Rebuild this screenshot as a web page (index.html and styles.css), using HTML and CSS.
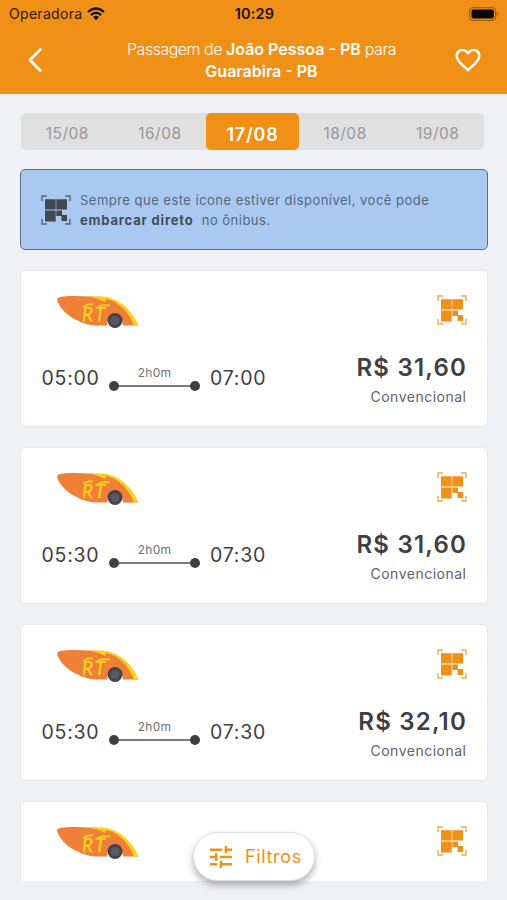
FILE: index.html
```html
<!DOCTYPE html>
<html lang="pt-BR">
<head>
<meta charset="utf-8">
<title>Passagens</title>
<link rel="stylesheet" href="styles.css">
</head>
<body>
<svg class="sprite" aria-hidden="true">
  <symbol id="qr" viewBox="0 0 30 30">
    <path d="M1 6V1h5M24 1h5v5M29 24v5h-5M6 29H1v-5" fill="none" stroke="currentColor" stroke-width="1.500" opacity=".75"/>
    <path d="M4 4.300h10.700v10.200H4zM15.300 4.300H26v10.200H15.300zM4 15.500h10.700V26.500H4zM15.300 15.500h5.700v4.500h5v6h-5.500v-5h-5.200z" fill="currentColor"/>
  </symbol>
  <symbol id="logo" viewBox="0 0 82 34">
    <path d="M0 4C2 1 10 1 18 1L45 2C60 3 73 13 81 30.500H66Q65 20 58 20Q50 21 50 30.500H38C20 29 2 16 0 4Z" fill="#f07f38"/>
    <path d="M31 1.300L46 1.500C62 3 75 15 81.500 30.500H77C72 17 61 6 49 4L48 7C43 4 37 3 31 1.300Z" fill="#fdd01c"/>
    <circle cx="58" cy="25.500" r="7.500" fill="#45434b"/>
    <circle cx="58" cy="25.500" r="4.500" fill="#5b5861"/>
    <path d="M26.500 12.500Q29 8.500 36 9.500M40.500 13Q43 9 53 10.500" fill="none" stroke="#fdd01c" stroke-width="1.800"/>
    <text x="25" y="25.500" class="logo-text">R<tspan dx="2">T</tspan></text>
  </symbol>
</svg>

<header class="header">
  <div class="status">
    <div class="carrier"><span>Operadora</span>
      <svg class="wifi" viewBox="0 0 18 14"><path d="M1 5Q9-2 17 5M3.800 8Q9 3.500 14.200 8" fill="none" stroke="#111" stroke-width="2.300"/><path d="M6 10Q9 7.600 12 10L9 13.200Z" fill="#111"/></svg>
    </div>
    <div class="clock">10:29</div>
    <svg class="battery" viewBox="0 0 31 14"><rect x=".7" y=".7" width="26" height="12.600" rx="3.500" fill="none" stroke="#9d5f10" stroke-width="1.300"/><rect x="2.500" y="2.500" width="22.400" height="9" rx="2" fill="#050505"/><path d="M28.200 4.800Q30.500 7 28.200 9.200Z" fill="#9d5f10"/></svg>
  </div>
  <div class="nav">
    <svg class="back" viewBox="0 0 14 24"><path d="M12.300 1.500L2 12L12.300 22.500" fill="none" stroke="#fff" stroke-width="2.800" stroke-linecap="round" stroke-linejoin="round"/></svg>
    <h1 class="title">Passagem de <b>João Pessoa - PB</b> para<br><b>Guarabira - PB</b></h1>
    <svg class="heart" viewBox="0 0 24 24"><path fill="#fff" d="M16.500 3c-1.740 0-3.410.81-4.500 2.090C10.910 3.810 9.240 3 7.500 3 4.420 3 2 5.420 2 8.500c0 3.780 3.400 6.860 8.550 11.540L12 21.350l1.450-1.320C18.600 15.360 22 12.280 22 8.500 22 5.420 19.580 3 16.500 3zm-4.400 15.550l-.1.100-.1-.1C7.140 14.240 4 11.390 4 8.500 4 6.500 5.500 5 7.500 5c1.540 0 3.040.99 3.570 2.360h1.870C13.460 5.990 14.960 5 16.500 5c2 0 3.500 1.500 3.500 3.500 0 2.890-3.140 5.740-7.900 10.050z"/></svg>
  </div>
</header>

<main class="content">
  <nav class="dates">
    <span class="date">15/08</span><span class="date">16/08</span><span class="date active">17/08</span><span class="date">18/08</span><span class="date">19/08</span>
  </nav>
  <section class="notice">
    <svg class="qr"><use href="#qr"/></svg>
    <p class="notice-text">Sempre que este ícone estiver disponível, você pode<br><b>embarcar direto</b>&nbsp; no ônibus.</p>
  </section>
  <section class="trips">
    <article class="card">
      <div class="card-top"><svg class="logo"><use href="#logo"/></svg><svg class="qr"><use href="#qr"/></svg></div>
      <div class="card-info">
        <div class="times"><span class="time">05:00</span><div class="route"><span class="duration">2h0m</span><div class="line"></div></div><span class="time">07:00</span></div>
        <div class="fare"><div class="price">R$ 31,60</div><div class="class">Convencional</div></div>
      </div>
    </article>
    <article class="card">
      <div class="card-top"><svg class="logo"><use href="#logo"/></svg><svg class="qr"><use href="#qr"/></svg></div>
      <div class="card-info">
        <div class="times"><span class="time">05:30</span><div class="route"><span class="duration">2h0m</span><div class="line"></div></div><span class="time">07:30</span></div>
        <div class="fare"><div class="price">R$ 31,60</div><div class="class">Convencional</div></div>
      </div>
    </article>
    <article class="card">
      <div class="card-top"><svg class="logo"><use href="#logo"/></svg><svg class="qr"><use href="#qr"/></svg></div>
      <div class="card-info">
        <div class="times"><span class="time">05:30</span><div class="route"><span class="duration">2h0m</span><div class="line"></div></div><span class="time">07:30</span></div>
        <div class="fare"><div class="price">R$ 32,10</div><div class="class">Convencional</div></div>
      </div>
    </article>
    <article class="card cut">
      <div class="card-top"><svg class="logo"><use href="#logo"/></svg><svg class="qr"><use href="#qr"/></svg></div>
    </article>
  </section>
</main>

<button class="filter">
  <svg class="tune" viewBox="3 3 18 18"><path fill="currentColor" d="M3 17v2h6v-2H3zM3 5v2h10V5H3zm10 16v-2h8v-2h-8v-2h-2v6h2zM7 9v2H3v2h4v2h2V9H7zm14 4v-2H11v2h10zm-6-4h2V7h4V5h-4V3h-2v6z"/></svg>
  <span>Filtros</span>
</button>
</body>
</html>
```

FILE: styles.css
```css
* { box-sizing: border-box; }

body {
  margin: 0;
  height: 900px;
  overflow: hidden;
  background: #f0f1f5;
  font-family: Inter, "Liberation Sans", sans-serif;
  color: #404042;
}

svg { display: block; flex: none; }
.sprite { display: none; }

.header { height: 94px; background: #f09016; }

.status {
  height: 27px;
  display: grid;
  grid-template-columns: 1fr auto 1fr;
  align-items: center;
  padding: 0 7px 0 9px;
}
.carrier {
  display: flex;
  align-items: center;
  gap: 5px;
  font-size: 14px;
  color: #2b1a06;
  letter-spacing: 0.3px;
}
.wifi { width: 18px; height: 14px; }
.clock { font-size: 14.5px; font-weight: 600; color: #1a1005; letter-spacing: 0.2px; }
.battery { width: 31px; height: 14px; justify-self: end; }

.nav {
  height: 66px;
  display: grid;
  grid-template-columns: 42px 1fr 30px;
  align-items: center;
  padding: 0 24px 0 28px;
}
.back { width: 14px; height: 24px; }
.title {
  margin: 0;
  font-size: 16px;
  line-height: 22px;
  font-weight: 300;
  text-align: center;
  color: #fff;
  letter-spacing: -0.5px;
  white-space: nowrap;
}
.title b { font-weight: 600; letter-spacing: 0; }
.heart { width: 30px; height: 30px; }

.content { padding: 19px 20px 0; }

.dates {
  display: flex;
  width: 463px;
  height: 37px;
  margin-left: 1px;
  border-radius: 5px;
  background: #e0e0e1;
}
.date {
  flex: 1;
  text-align: center;
  font-size: 15.5px;
  line-height: 41px;
  color: #98989b;
  letter-spacing: 0.5px;
}
.date.active {
  border-radius: 5px;
  background: #f09016;
  color: #fff;
  font-size: 18px;
  font-weight: 600;
  line-height: 44px;
  letter-spacing: 0.8px;
}

.notice {
  display: flex;
  align-items: center;
  gap: 9px;
  width: 468px;
  height: 81px;
  margin-top: 19px;
  padding: 0 20px;
  border: 1px solid #5c6d82;
  border-radius: 5px;
  background: #a9c9f1;
  color: #43484f;
}
.notice-text {
  margin: 0;
  font-size: 13px;
  line-height: 20px;
  color: #54677d;
  letter-spacing: 0.48px;
  white-space: nowrap;
}
.notice-text b { font-weight: 700; letter-spacing: 0.82px; color: #404d5c; }
.qr { width: 30px; height: 30px; }

.trips {
  display: flex;
  flex-direction: column;
  gap: 20px;
  width: 468px;
  height: 611px;
  margin-top: 20px;
  overflow: hidden;
}
.card {
  flex: none;
  height: 157px;
  padding: 24px 20px 0;
  border: 1px solid #e5e6ea;
  border-radius: 5px;
  background: #fff;
}
.card.cut { height: 120px; }
.card-top { display: flex; justify-content: space-between; padding-left: 16px; color: #f09016; }
.logo { width: 82px; height: 34px; }
.logo-text {
  font: italic 400 19px Lato, sans-serif;
  fill: #fdd01c;
  stroke: #fdd01c;
  stroke-width: 0.4px;
}
.card-info { display: flex; justify-content: space-between; margin-top: 22px; }
.times { display: flex; align-items: center; height: 54px; }
.time { width: 58px; padding-left: 0.5px; font-size: 19.5px; letter-spacing: 0.75px; white-space: nowrap; }
.route {
  width: 91px;
  margin: 0 9.500px 0 10px;
  text-align: center;
}
.duration { display: block; font-size: 12px; line-height: 16px; color: #717173; letter-spacing: 0.3px; }
.line {
  display: flex;
  align-items: center;
  justify-content: space-between;
  height: 10px;
  background: linear-gradient(#7b7b7c, #7b7b7c) center / 84px 2px no-repeat;
}
.line::before, .line::after {
  content: "";
  width: 10px;
  height: 10px;
  border-radius: 50%;
  background: #404042;
}
.fare { text-align: right; }
.price { font-size: 24px; font-weight: 600; line-height: 34px; letter-spacing: 1.2px; }
.class { font-size: 14px; line-height: 24px; color: #626264; letter-spacing: 0.5px; margin-right: 0.5px; }

.filter {
  position: absolute;
  left: 193px;
  top: 832px;
  width: 122px;
  height: 49px;
  display: flex;
  align-items: center;
  gap: 13px;
  padding: 0 0 0 16px;
  border: 1px solid #e0e0e2;
  border-radius: 25px;
  background: #fff;
  box-shadow: 0 4px 7px rgba(0, 0, 0, 0.3);
  color: #f09016;
  font: 400 18px Inter, sans-serif;
  letter-spacing: 0.65px;
}
.tune { width: 22px; height: 22px; }
```
